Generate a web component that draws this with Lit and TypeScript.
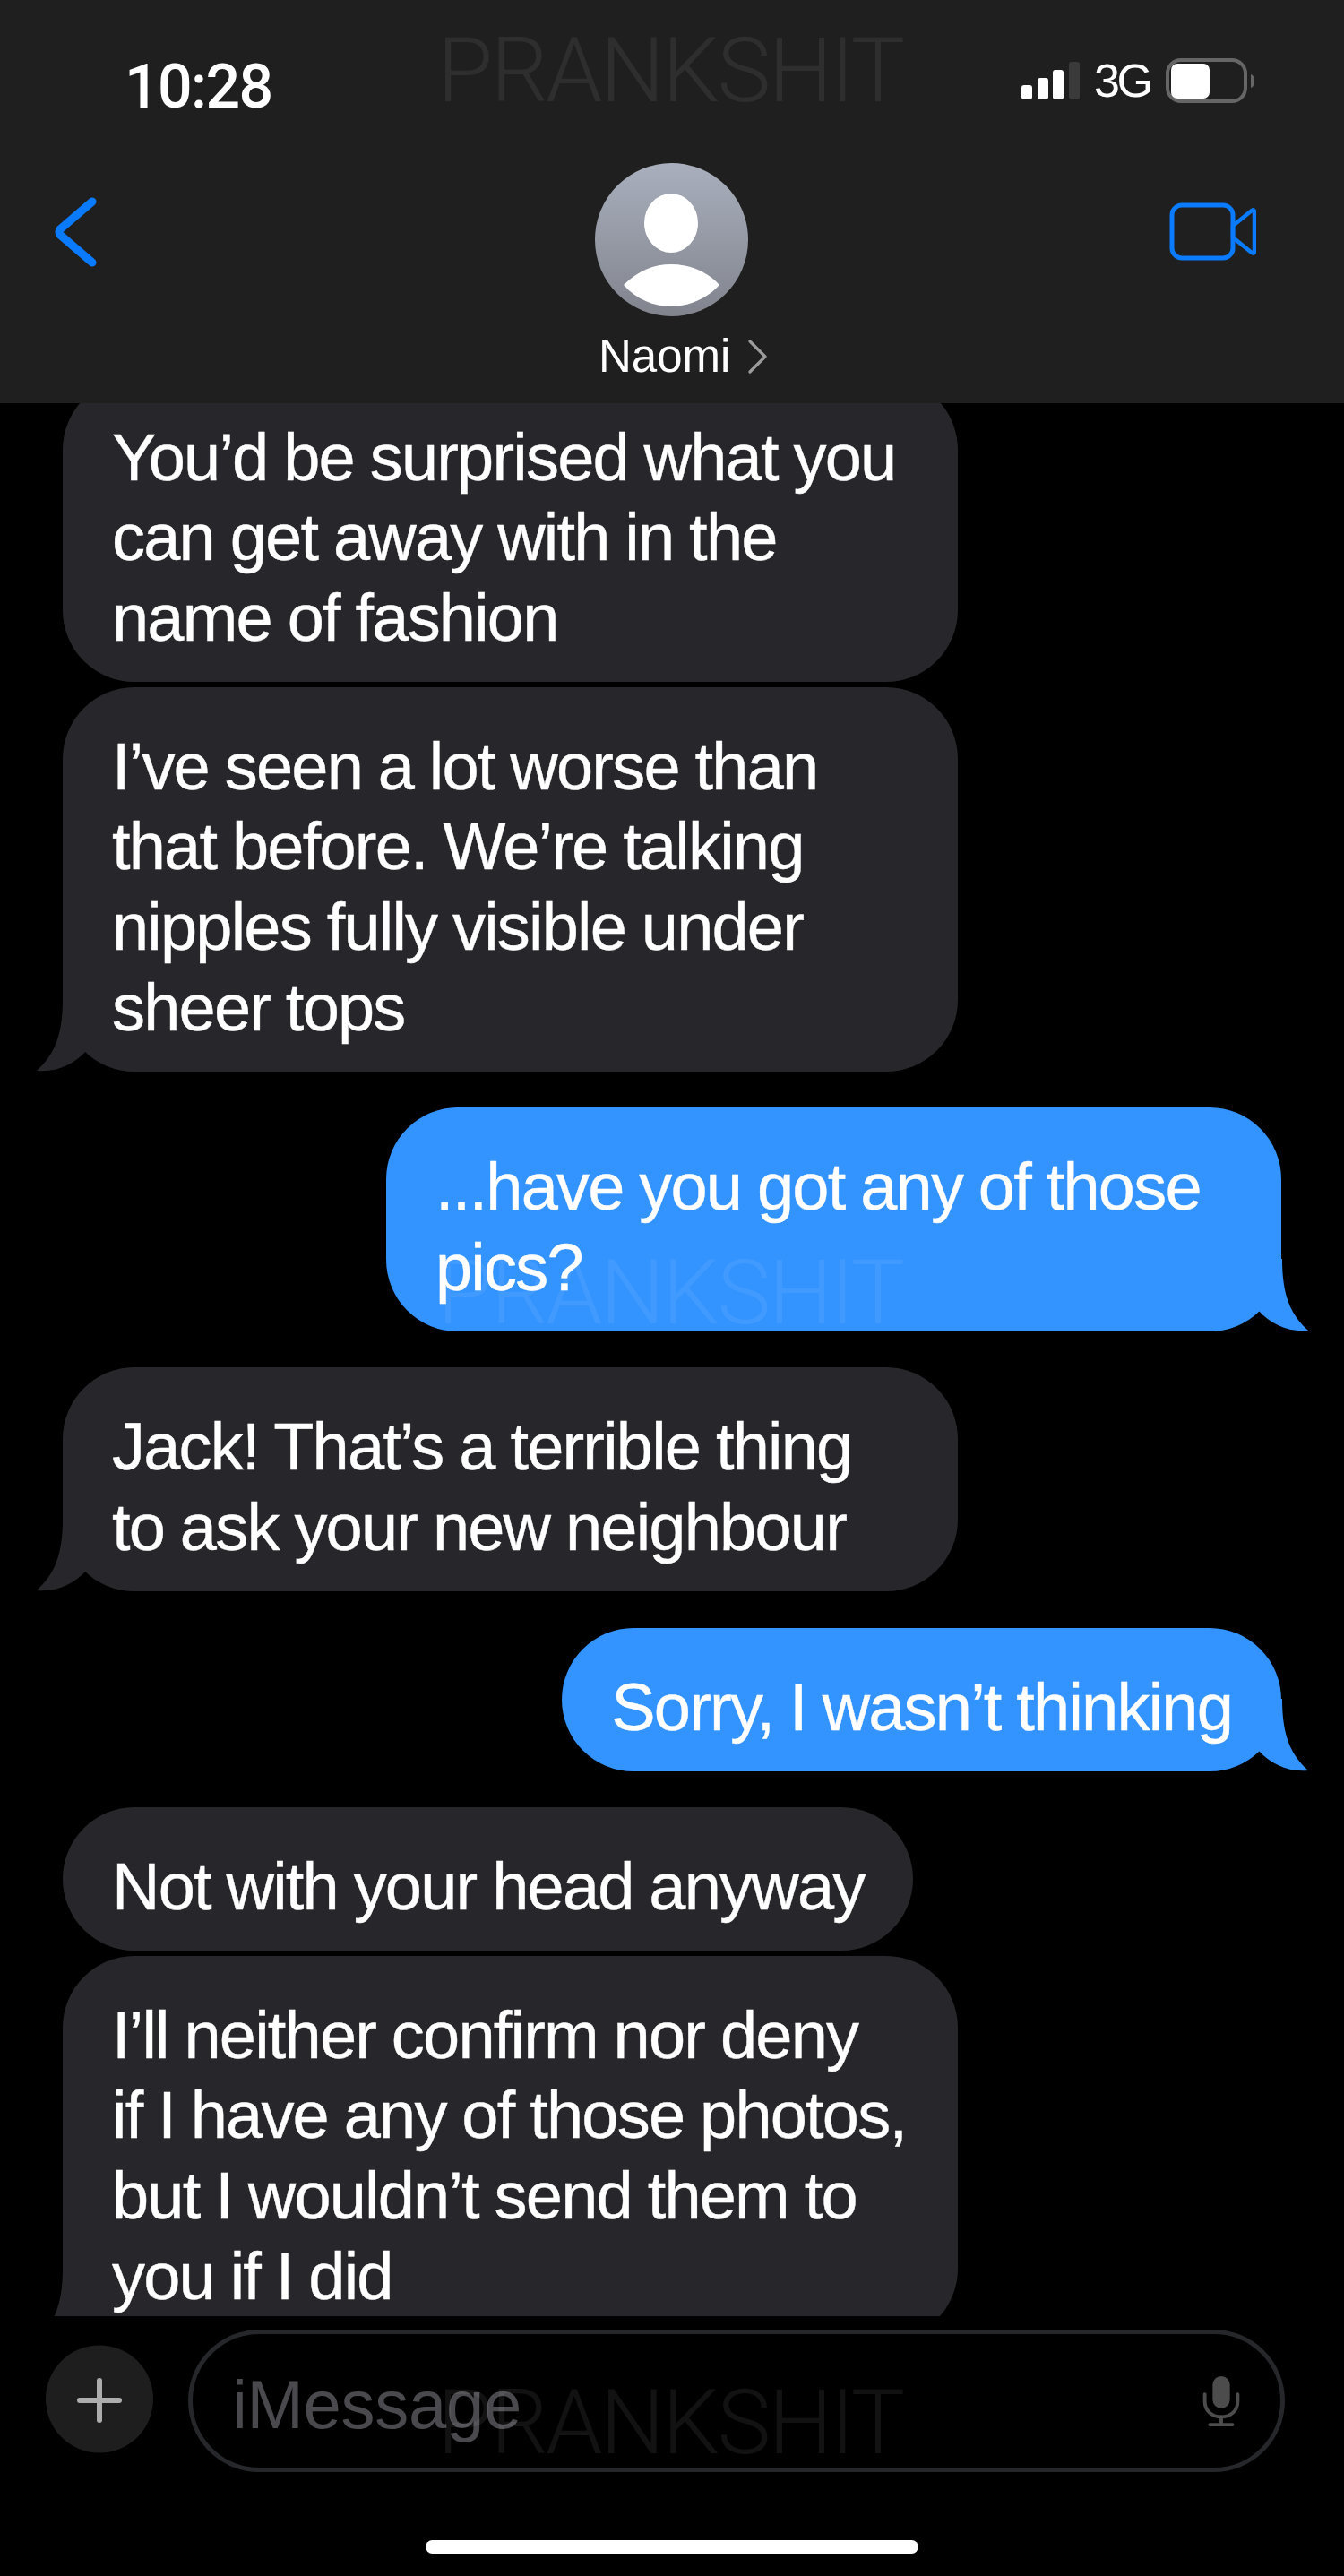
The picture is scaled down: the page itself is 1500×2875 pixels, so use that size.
import { LitElement, html, css, svg } from "lit";
import { customElement } from "lit/decorators.js";

type Msg = { text: string; me?: boolean; tail?: boolean; cls: string };

const MESSAGES: Msg[] = [
  { text: "You’d be surprised what you can get away with in the name of fashion", cls: "first" },
  { text: "I’ve seen a lot worse than that before. We’re talking nipples fully visible under sheer tops", tail: true, cls: "near" },
  { text: "...have you got any of those pics?", me: true, tail: true, cls: "far" },
  { text: "Jack! That’s a terrible thing to ask your new neighbour", tail: true, cls: "far" },
  { text: "Sorry, I wasn’t thinking", me: true, tail: true, cls: "far" },
  { text: "Not with your head anyway", cls: "far" },
  { text: "I’ll neither confirm nor deny if\u00A0I have any of those photos, but I wouldn’t send them to you if I did", tail: true, cls: "near" },
];

const tail = svg`<path d="M29 0C29 40 20 62 0 80C22 82 42 73 56 57L70 30L70 0Z" />`;

@customElement("app-root")
export class AppRoot extends LitElement {
  static styles = css`
    :host {
      display: block;
      width: 1500px;
      height: 2875px;
      position: relative;
      overflow: hidden;
      background: #000;
      color: #fff;
      font-family: "Liberation Sans", Arial, sans-serif;
    }
    .page { display: flex; flex-direction: column; height: 2875px; }
    .header { height: 450px; flex: none; background: #1f1f1f; }
    .status { height: 182px; display: flex; align-items: flex-start; }
    .time {
      margin: 58px 0 0 139px;
      font: 500 68px/78px Roboto, sans-serif;
      letter-spacing: -1.6px;
    }
    .sys { margin-left: auto; margin-right: 100px; display: flex; align-items: flex-start; padding-top: 65px; }
    .sig { width: 71px; height: 46px; display: block; }
    .net {
      margin-left: 10px;
      font-size: 52px;
      line-height: 50px;
      letter-spacing: -3.5px;
      width: 80px;
      height: 50px;
    }
    .bat { width: 99px; height: 50px; display: block; }
    .nav { display: grid; grid-template-columns: 664px auto 1fr; }
    .back { display: block; width: 50px; height: 84px; margin: 35px 0 0 60px; }
    .who { display: flex; flex-direction: column; align-items: flex-start; }
    .ava { width: 171px; height: 171px; display: block; }
    .name { display: flex; align-items: center; margin: 16px 0 0 4px; font-size: 51px; line-height: 58px; }
    .name svg { width: 24px; height: 38px; margin-left: 19px; }
    .vid { display: block; justify-self: end; width: 97px; height: 65px; margin: 44px 98px 0 0; }

    .msgs {
      height: 2135px;
      flex: none;
      overflow: hidden;
      display: flex;
      flex-direction: column;
      align-items: flex-start;
      padding: 0 70px;
      box-sizing: border-box;
    }
    .bub {
      position: relative;
      box-sizing: border-box;
      flex: none;
      max-width: 999px;
      padding: 44px 55px 26.3px;
      border-radius: 80px;
      background: #27272b;
      font-size: 74px;
      line-height: 89.7px;
      letter-spacing: -1.8px;
      word-spacing: -1px;
      -webkit-text-stroke: 0.4px #fff;
    }
    .bub.me { align-self: flex-end; background: #3393ff; }
    .first { margin-top: -28.4px; }
    .near { margin-top: 5.5px; }
    .far { margin-top: 40.5px; }
    .tail { position: absolute; left: -29px; bottom: 0; width: 70px; height: 81px; fill: #27272b; display: block; }
    .me .tail { left: auto; right: -30px; transform: scaleX(-1); fill: #3393ff; }

    .composer { flex: 1; display: flex; flex-direction: column; }
    .row { display: flex; align-items: center; gap: 39px; padding: 15px 66px 0 51px; }
    .plus { width: 120px; height: 121px; flex: none; display: block; margin-bottom: 4px; }
    .field {
      flex: 1;
      height: 159px;
      box-sizing: border-box;
      border: 5px solid #26272a;
      border-radius: 80px;
      display: flex;
      align-items: center;
      justify-content: space-between;
      padding: 0 45px 0 44px;
      color: #4a4a4e;
      font-size: 76px;
      letter-spacing: -0.3px;
    }
    .ph { padding-top: 8px; }
    .mic { width: 42px; height: 58px; display: block; }
    .home { width: 550px; height: 15px; margin: 76px auto 0; border-radius: 8px; background: #fff; }

    .mark {
      position: absolute;
      left: 488px;
      font: 300 101px/100px Roboto, sans-serif;
      letter-spacing: -2.5px;
      color: rgba(255, 255, 255, 0.07);
      white-space: nowrap;
      pointer-events: none;
    }
    .m1 { top: 29px; }
    .m2 { top: 1393px; }
    .m3 { top: 2654px; }
  `;

  render() {
    return html`
      <div class="page">
        <div class="header">
          <div class="status">
            <div class="time">10:28</div>
            <div class="sys">
              <svg class="sig" viewBox="0 0 71 46">
                <rect x="0" y="30" width="12" height="16" rx="3" fill="#fff" />
                <rect x="18" y="22" width="12" height="24" rx="3" fill="#fff" />
                <rect x="35" y="13" width="12" height="33" rx="3" fill="#fff" />
                <rect x="53" y="4" width="12" height="42" rx="3" fill="#3a3a3a" />
              </svg>
              <div class="net">3G</div>
              <svg class="bat" viewBox="0 0 99 50">
                <rect x="2" y="2" width="87" height="46" rx="15" fill="none" stroke="#666" stroke-width="4" />
                <rect x="6" y="6" width="43" height="39" rx="7" fill="#fff" />
                <path d="M95 18C98 19 99 22 99 25C99 29 98 32 95 33Z" fill="#666" />
              </svg>
            </div>
          </div>
          <div class="nav">
            <svg class="back" viewBox="0 0 50 84">
              <path d="M43 8L7 39Q5 42 7 45L43 76" fill="none" stroke="#0a7aff" stroke-width="9" stroke-linecap="round" stroke-linejoin="round" />
            </svg>
            <div class="who">
              <svg class="ava" viewBox="0 0 171 171">
                <defs>
                  <linearGradient id="g" x1="0" y1="0" x2="0" y2="1">
                    <stop offset="0" stop-color="#a9afbd" />
                    <stop offset="1" stop-color="#81848d" />
                  </linearGradient>
                </defs>
                <circle cx="85.5" cy="85.5" r="85.5" fill="url(#g)" />
                <ellipse cx="85" cy="67" rx="30" ry="33" fill="#fff" />
                <path d="M32 136C48 120 66 113 85 113C104 113 124 120 139 136C124 152 104 160 85 160C66 160 46 152 32 136Z" fill="#fff" />
              </svg>
              <div class="name">
                Naomi
                <svg viewBox="0 0 24 38"><path d="M3 2L20 19L3 36" fill="none" stroke="#9c9c9c" stroke-width="3.2" stroke-linecap="round" stroke-linejoin="round" /></svg>
              </div>
            </div>
            <svg class="vid" viewBox="0 0 97 65">
              <rect x="3" y="3" width="68" height="59" rx="11" fill="none" stroke="#0a7aff" stroke-width="5" />
              <path d="M71 26L92 9Q95 7 95 11V54Q95 58 92 56L71 39Z" fill="none" stroke="#0a7aff" stroke-width="4.5" stroke-linejoin="round" />
            </svg>
          </div>
        </div>

        <div class="msgs">
          ${MESSAGES.map(
            (m) => html`<div class="bub ${m.cls} ${m.me ? "me" : ""}">
              ${m.text}
              ${m.tail ? html`<svg class="tail" viewBox="0 0 70 81">${tail}</svg>` : ""}
            </div>`
          )}
        </div>

        <div class="composer">
          <div class="row">
            <svg class="plus" viewBox="0 0 120 121">
              <circle cx="60" cy="60.5" r="60" fill="#1f1e1f" />
              <path d="M60 40V84M38 62H82" stroke="#adadad" stroke-width="6" stroke-linecap="round" />
            </svg>
            <div class="field">
              <span class="ph">iMessage</span>
              <svg class="mic" viewBox="0 0 42 60">
                <rect x="11" y="1" width="20" height="37" rx="10" fill="#4c4c4c" />
                <path d="M2 22V30C2 41 10 48 21 48C32 48 40 41 40 30V22" fill="none" stroke="#4c4c4c" stroke-width="4" stroke-linecap="round" />
                <path d="M21 48V56M8 57H34" stroke="#4c4c4c" stroke-width="4" stroke-linecap="round" fill="none" />
              </svg>
            </div>
          </div>
          <div class="home"></div>
        </div>
      </div>
      <div class="mark m1">PRANKSHIT</div>
      <div class="mark m2">PRANKSHIT</div>
      <div class="mark m3">PRANKSHIT</div>
    `;
  }
}
